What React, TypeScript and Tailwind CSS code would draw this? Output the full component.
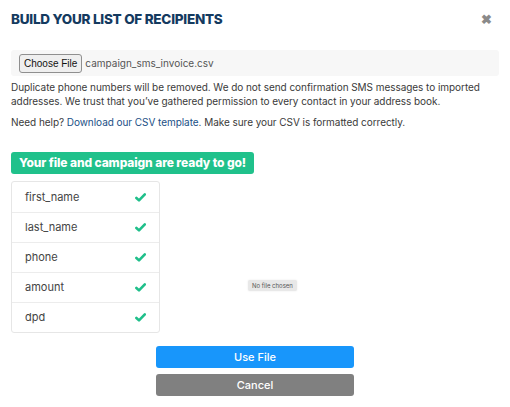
const FIELDS = ["first_name", "last_name", "phone", "amount", "dpd"];

function Check() {
  return (
    <svg width="11" height="9" viewBox="0 0 11 9" className="text-[#1fbf8a]">
      <path d="M1.4 5 L4 7.4 L9.8 1.4" fill="none" stroke="currentColor" strokeWidth="2.6" strokeLinecap="round" strokeLinejoin="round" />
    </svg>
  );
}

export default function App() {
  return (
    <div className="w-[510px] h-[407px] bg-white text-[#3a3a3a] font-['Inter',sans-serif] relative">
      <div className="px-[11px] pt-[10px]">
        <div className="flex items-center justify-between h-[18px]">
          <h1 className="text-[13.5px] font-extrabold text-[#143a5f] tracking-[-0.25px]">
            BUILD YOUR LIST OF RECIPIENTS
          </h1>
          <span className="text-[#8a8a8a] text-[13px] font-bold mr-[7px] leading-none">✖</span>
        </div>

        <div className="mt-[22px] h-[26px] bg-[#f7f7f7] rounded-[3px] flex items-center px-[8px]">
          <button className="h-[19px] px-[4px] border border-[#8f8f8f] rounded-[3px] bg-[#efefef] text-[10px] text-[#111] font-['Liberation_Sans',sans-serif]">
            Choose File
          </button>
          <span className="ml-[3px] text-[10px] text-[#555]">campaign_sms_invoice.csv</span>
        </div>

        <p className="mt-[4px] text-[10px] leading-[14px] tracking-[-0.05px] text-[#3a3a3a]">
          Duplicate phone numbers will be removed. We do not send confirmation SMS messages to imported addresses. We trust that you’ve gathered permission to every contact in your address book.
        </p>
        <p className="mt-[7px] text-[10px] leading-[14px] tracking-[-0.05px] text-[#3a3a3a]">
          Need help? <a className="text-[#1a4f86]">Download our CSV template</a>. Make sure your CSV is formatted correctly.
        </p>

        <div className="mt-[23px] w-[243px] h-[22px] bg-[#20c18b] rounded-[3px] flex items-center justify-center text-white text-[12px] font-extrabold tracking-[-0.1px]">
          Your file and campaign are ready to go!
        </div>

        <div className="mt-[7px] w-[149px] border border-[#e6e6e6] rounded-[3px]">
          {FIELDS.map((f, i) => (
            <div
              key={f}
              className={`h-[30px] flex items-center justify-between pl-[13px] pr-[13px] text-[11px] text-[#444] ${i > 0 ? "border-t border-[#ececec]" : ""}`}
            >
              <span>{f}</span>
              <Check />
            </div>
          ))}
        </div>

        <div className="mt-[13px] ml-[145px] w-[198px] flex flex-col gap-[6px]">
          <button className="h-[22px] rounded-[3px] bg-[#1896fb] text-white text-[11px] font-medium">Use File</button>
          <button className="h-[22px] rounded-[3px] bg-[#808080] text-white text-[11px] font-medium">Cancel</button>
        </div>
      </div>

      <div className="absolute left-[248px] top-[280px] h-[11px] px-[4px] bg-[#e8e8e8] rounded-[2px] text-[6px] leading-[11px] text-[#555] shadow-[0_0_2px_rgba(0,0,0,0.1)]">
        No file chosen
      </div>
    </div>
  );
}
